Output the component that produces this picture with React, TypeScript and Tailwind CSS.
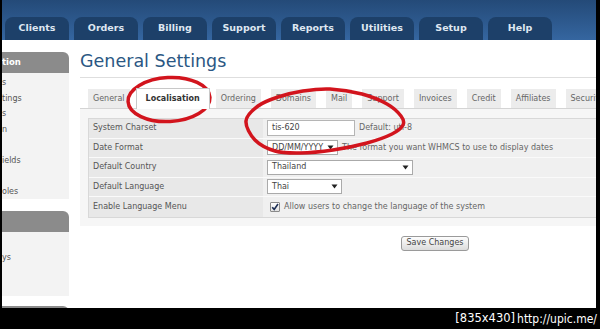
import React from "react";

const topTabs = ["Clients", "Orders", "Billing", "Support", "Reports", "Utilities", "Setup", "Help"];
const settingTabs = ["General", "Localisation", "Ordering", "Domains", "Mail", "Support", "Invoices", "Credit", "Affiliates", "Security"];

// smooth closed curve through hand-picked points (the red marker circle)
function smoothPath(pts: number[][]) {
  const n = pts.length;
  let d = `M${pts[0][0]},${pts[0][1]}`;
  for (let i = 0; i < n; i++) {
    const p0 = pts[(i - 1 + n) % n];
    const p1 = pts[i];
    const p2 = pts[(i + 1) % n];
    const p3 = pts[(i + 2) % n];
    const c1x = p1[0] + (p2[0] - p0[0]) / 6;
    const c1y = p1[1] + (p2[1] - p0[1]) / 6;
    const c2x = p2[0] - (p3[0] - p1[0]) / 6;
    const c2y = p2[1] - (p3[1] - p1[1]) / 6;
    d += ` C${c1x},${c1y} ${c2x},${c2y} ${p2[0]},${p2[1]}`;
  }
  return d + "Z";
}

const bigCircle = [
  [246, 121], [258, 106], [278, 97], [303, 91], [330, 89], [362, 94], [387, 104],
  [401, 116], [403, 125], [392, 134], [367, 143], [333, 150], [300, 153], [275, 151], [255, 140],
];

function Arrow() {
  return (
    <svg width="7" height="5" viewBox="0 0 7 5">
      <path d="M0.5 0.5 L6.5 0.5 L3.5 4.5 Z" fill="#222" />
    </svg>
  );
}

function Select({ value, width }: { value: string; width: string }) {
  return (
    <div className={`${width} h-[15px] bg-white border border-[#aaaaaa] flex items-center justify-between pl-[4px] pr-[3px] text-[#444]`}>
      <span>{value}</span>
      <Arrow />
    </div>
  );
}

function Row({ label, children }: { label: string; children: React.ReactNode }) {
  return (
    <div className="flex h-[19.5px] border-b border-[#fafafa] last:border-b-0">
      <div className="w-[174px] shrink-0 bg-[#e8e8e8] pl-[4px] flex items-center text-[#555]">{label}</div>
      <div className="flex-1 bg-[#f0f0f0] pl-[4px] flex items-center text-[#555]">{children}</div>
    </div>
  );
}

function Sidebar() {
  const items = ["s", "tings", "s", "n", "", "ields", "", "oles"];
  return (
    <div className="w-[67px] shrink-0 mt-[12px]">
      <div className="h-[21px] bg-[#8b8b8b] rounded-tr-[6px] flex items-center text-white font-bold text-[8.5px]">tion</div>
      <div className="h-[126px] bg-[#f3f3f3] pt-[2px] text-[8px] leading-[15.5px] text-[#555]">
        {items.map((t, i) => (
          <div key={i} className="h-[15.5px]">{t}</div>
        ))}
      </div>
      <div className="mt-[12px] h-[21px] bg-[#8b8b8b] rounded-tr-[6px]" />
      <div className="h-[64px] bg-[#f3f3f3] pt-[2px] text-[8px] leading-[15.5px] text-[#555]">
        <div className="h-[15.5px]"></div>
        <div className="h-[15.5px]">ys</div>
      </div>
      <div className="mt-[10px] h-[21px] bg-[#8b8b8b] rounded-tr-[6px]" />
    </div>
  );
}

function Main() {
  return (
    <div className="ml-[11px] w-[710px] shrink-0 text-[8px]">
      <h1 className="mt-[10px] pb-[5px] leading-[22px] text-[17.5px] text-[#2b5783] border-b border-[#dedede]">General Settings</h1>
      <div className="mt-[10px] h-[20px] flex items-end pl-[8px] gap-[10px]">
        {settingTabs.map((t) =>
          t === "Localisation" ? (
            <div key={t} className="relative z-10 -mx-[4px] -mb-px h-[21px] px-[9px] bg-white border border-b-0 border-[#c8c8c8] flex items-center font-bold text-[#333]">
              {t}
            </div>
          ) : (
            <div key={t} className="h-[19px] px-[5px] bg-[#ececec] flex items-center text-[#666]">
              {t}
            </div>
          )
        )}
      </div>
      <div className="border-t border-[#d4d4d4] bg-[#f6f6f6] px-[8px] pt-[9px] pb-[8px]">
        <div className="border border-[#d8d8d8]">
          <Row label="System Charset">
            <div className="w-[88px] h-[16px] bg-white border border-[#b5b5b5] pl-[4px] flex items-center text-[#444]">tis-620</div>
            <span className="ml-[4px] text-[#666]">Default: utf-8</span>
          </Row>
          <Row label="Date Format">
            <Select value="DD/MM/YYYY" width="w-[71px]" />
            <span className="ml-[4px] text-[#666]">The format you want WHMCS to use to display dates</span>
          </Row>
          <Row label="Default Country">
            <Select value="Thailand" width="w-[146px]" />
          </Row>
          <Row label="Default Language">
            <Select value="Thai" width="w-[75px]" />
          </Row>
          <Row label="Enable Language Menu">
            <div className="ml-[3px] w-[10px] h-[10px] bg-gradient-to-b from-white to-[#e2e2e2] border border-[#8a8a8a] rounded-[1px] flex items-center justify-center">
              <svg width="8" height="8" viewBox="0 0 8 8">
                <path d="M1.2 4.2 L3.2 6.4 L7 1" stroke="#1d2f55" strokeWidth="1.6" fill="none" />
              </svg>
            </div>
            <span className="ml-[4px] text-[#666]">Allow users to change the language of the system</span>
          </Row>
        </div>
      </div>
      <div className="mt-[10px] flex justify-center">
        <div className="w-[68px] h-[15px] bg-gradient-to-b from-[#fdfdfd] to-[#dcdcdc] border border-[#9a9a9a] rounded-[3px] flex items-center justify-center text-[#444]">
          Save Changes
        </div>
      </div>
    </div>
  );
}

export default function App() {
  return (
    <div className="relative w-[600px] h-[329px] overflow-hidden bg-black font-['DejaVu_Sans',sans-serif]">
      <div className="ml-[2px] w-[594px] h-[308px] bg-white overflow-hidden">
        <div className="h-[40px] bg-gradient-to-b from-[#244a78] to-[#3566a0] flex items-end pl-[3px] gap-[5px]">
          {topTabs.map((t) => (
            <div key={t} className="w-[64px] h-[23px] shrink-0 rounded-t-[8px] bg-[#1d4069] flex items-center justify-center text-[9.5px] font-bold text-[#dfe7f1]">
              {t}
            </div>
          ))}
        </div>
        <div className="flex items-start">
          <Sidebar />
          <Main />
        </div>
      </div>
      <div className="h-[21px] flex items-center justify-end pr-[3px] text-white">
        <span className="text-[11.5px]">[835x430]</span>
        <span className="ml-[2px] text-[12px] font-['DejaVu_Sans_Condensed',sans-serif]">http://upic.me/</span>
      </div>
      <svg className="absolute left-0 top-0 pointer-events-none" width="600" height="329" viewBox="0 0 600 329">
        <ellipse cx="169" cy="99.5" rx="41" ry="22" fill="none" stroke="#d2141d" strokeWidth="3.5" transform="rotate(-3 169 99.5)" />
        <path d={smoothPath(bigCircle)} fill="none" stroke="#d2141d" strokeWidth="3.5" />
      </svg>
    </div>
  );
}
